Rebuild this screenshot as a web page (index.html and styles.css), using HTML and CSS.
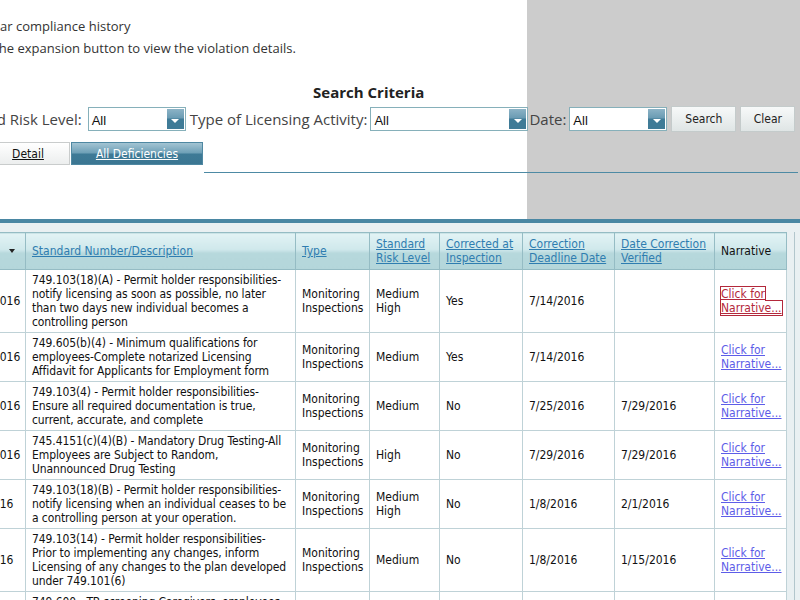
FILE: index.html
```html
<!DOCTYPE html>
<html lang="en">
<head>
<meta charset="utf-8">
<title>Compliance History</title>
<link rel="stylesheet" href="styles.css">
</head>
<body>
<div class="page">
  <div class="intro">
    <p>ten year compliance history</p>
    <p>Click the expansion button to view the violation details.</p>
  </div>

  <div class="search">
    <h3 class="search-title">Search Criteria</h3>
    <div class="search-row">
      <label class="lbl lbl-first">Standard Risk Level:</label>
      <div class="select s-small"><span class="val">All</span><span class="arrow"></span></div>
      <label class="lbl">Type of Licensing Activity:</label>
      <div class="select s-wide"><span class="val">All</span><span class="arrow"></span></div>
      <label class="lbl lbl-date">Date:</label>
      <div class="select s-small"><span class="val">All</span><span class="arrow"></span></div>
      <button class="btn btn-search" type="button">Search</button>
      <button class="btn btn-clear" type="button">Clear</button>
    </div>
  </div>

  <div class="tabs">
    <a class="tab tab-detail" href="#">Detail</a>
    <a class="tab tab-active" href="#">All Deficiencies</a>
    <div class="tab-rule"></div>
  </div>

  <div class="panel">
    <div class="grid">
      <table class="deficiencies">
        <colgroup>
          <col class="c-date"><col class="c-desc"><col class="c-type"><col class="c-risk">
          <col class="c-corr"><col class="c-dead"><col class="c-ver"><col class="c-narr">
        </colgroup>
        <thead>
          <tr>
            <th class="th-date"><a href="#">Date</a><span class="sort"></span></th>
            <th><a href="#">Standard Number/Description</a></th>
            <th><a href="#">Type</a></th>
            <th><a href="#">Standard Risk Level</a></th>
            <th><a href="#">Corrected at Inspection</a></th>
            <th><a href="#">Correction Deadline Date</a></th>
            <th><a href="#">Date Correction Verified</a></th>
            <th class="th-plain">Narrative</th>
          </tr>
        </thead>
        <tbody>
          <tr>
            <td>7/14/2016</td>
            <td class="desc">749.103(18)(A) - Permit holder responsibilities-<br>notify licensing as soon as possible, no later<br>than two days new individual becomes a<br>controlling person</td>
            <td>Monitoring Inspections</td>
            <td>Medium High</td>
            <td>Yes</td>
            <td>7/14/2016</td>
            <td></td>
            <td><a class="narr narr-focus" href="#">Click for Narrative...</a></td>
          </tr>
          <tr>
            <td>7/14/2016</td>
            <td class="desc">749.605(b)(4) - Minimum qualifications for<br>employees-Complete notarized Licensing<br>Affidavit for Applicants for Employment form</td>
            <td>Monitoring Inspections</td>
            <td>Medium</td>
            <td>Yes</td>
            <td>7/14/2016</td>
            <td></td>
            <td><a class="narr" href="#">Click for Narrative...</a></td>
          </tr>
          <tr>
            <td>7/11/2016</td>
            <td class="desc">749.103(4) - Permit holder responsibilities-<br>Ensure all required documentation is true,<br>current, accurate, and complete</td>
            <td>Monitoring Inspections</td>
            <td>Medium</td>
            <td>No</td>
            <td>7/25/2016</td>
            <td>7/29/2016</td>
            <td><a class="narr" href="#">Click for Narrative...</a></td>
          </tr>
          <tr>
            <td>7/15/2016</td>
            <td class="desc">745.4151(c)(4)(B) - Mandatory Drug Testing-All<br>Employees are Subject to Random,<br>Unannounced Drug Testing</td>
            <td>Monitoring Inspections</td>
            <td>High</td>
            <td>No</td>
            <td>7/29/2016</td>
            <td>7/29/2016</td>
            <td><a class="narr" href="#">Click for Narrative...</a></td>
          </tr>
          <tr>
            <td>1/4/2016</td>
            <td class="desc">749.103(18)(B) - Permit holder responsibilities-<br>notify licensing when an individual ceases to be<br>a controlling person at your operation.</td>
            <td>Monitoring Inspections</td>
            <td>Medium High</td>
            <td>No</td>
            <td>1/8/2016</td>
            <td>2/1/2016</td>
            <td><a class="narr" href="#">Click for Narrative...</a></td>
          </tr>
          <tr>
            <td>1/4/2016</td>
            <td class="desc">749.103(14) - Permit holder responsibilities-<br>Prior to implementing any changes, inform<br>Licensing of any changes to the plan developed<br>under 749.101(6)</td>
            <td>Monitoring Inspections</td>
            <td>Medium</td>
            <td>No</td>
            <td>1/8/2016</td>
            <td>1/15/2016</td>
            <td><a class="narr" href="#">Click for Narrative...</a></td>
          </tr>
          <tr>
            <td>1/4/2016</td>
            <td class="desc">749.600 - TB screening Caregivers, employees<br>and volunteers-Obtain a TB screening test<br>before contact with children, and as<br>required by the Department of State Health<br>Services</td>
            <td>Monitoring Inspections</td>
            <td>Medium</td>
            <td>No</td>
            <td>1/8/2016</td>
            <td>1/15/2016</td>
            <td><a class="narr" href="#">Click for Narrative...</a></td>
          </tr>
        </tbody>
      </table>
    </div>
  </div>
</div>
</body>
</html>
```

FILE: styles.css
```css
html, body {
  margin: 0;
  padding: 0;
}
body {
  background: #cccccc;
  font-family: "Open Sans", "DejaVu Sans", sans-serif;
  color: #333;
  overflow: hidden;
}
.page {
  margin-left: -60px;
  width: 587px;
  background: #ffffff;
  padding-top: 15px;
}
.intro p {
  margin: 0 0 0 23px;
  font-size: 13px;
  line-height: 22px;
  color: #333;
  white-space: nowrap;
}

/* search */
.search {
  width: max-content;
  margin-left: 2px;
  margin-top: 23px;
}
.search-title {
  margin: 0;
  text-align: center;
  font-size: 15px;
  line-height: 20px;
  font-weight: 700;
  color: #222;
}
.search-row {
  margin-top: 4px;
  display: flex;
  align-items: center;
  gap: 4px;
  height: 26px;
  white-space: nowrap;
}
.lbl {
  font-size: 15px;
  color: #444;
  margin-right: -1px;
}
.lbl-first {
  margin-right: 2px;
}
.lbl-date {
  margin-left: -3px;
}
.select {
  flex: none;
  box-sizing: border-box;
  height: 24px;
  border: 1px solid #86b0ba;
  background: #fff;
  display: flex;
  align-items: center;
  justify-content: space-between;
  padding: 1px;
}
.s-small { width: 98px; }
.s-wide { width: 158px; }
.select .val {
  font-family: "Liberation Sans", Arial, sans-serif;
  font-size: 13px;
  color: #111;
  padding-left: 2px;
  padding-top: 2px;
}
.select .arrow {
  width: 17px;
  height: 20px;
  background: linear-gradient(#8cb3c6 0%, #6a9bb3 45%, #3f7b97 50%, #3f7b97 100%);
  display: flex;
  align-items: center;
  justify-content: center;
}
.select .arrow::after {
  content: "";
  border-left: 4px solid transparent;
  border-right: 4px solid transparent;
  border-top: 4px solid #fff;
  margin-top: 3px;
}
.btn {
  flex: none;
  box-sizing: border-box;
  height: 26px;
  border: 1px solid #c4cbcb;
  background: linear-gradient(#f7f9f9, #dfe5e5);
  font-family: "DejaVu Sans Condensed", "DejaVu Sans", sans-serif;
  font-stretch: condensed;
  font-size: 12px;
  color: #222;
  padding: 0;
}
.btn-search { width: 65px; }
.btn-clear { width: 55px; }

/* tabs */
.tabs {
  margin-top: 10px;
  margin-left: 46px;
  display: flex;
  align-items: flex-start;
  gap: 1px;
}
.tab {
  flex: none;
  box-sizing: border-box;
  height: 23px;
  display: flex;
  align-items: center;
  justify-content: center;
  font-family: "DejaVu Sans Condensed", "DejaVu Sans", sans-serif;
  font-stretch: condensed;
  font-size: 12px;
  text-decoration: underline;
}
.tab-detail {
  width: 84px;
  color: #111;
  background: linear-gradient(#ffffff, #eceeee);
  border: 1px solid #c9cccc;
}
.tab-active {
  width: 132px;
  color: #fff;
  background: linear-gradient(#a3c4d3 0%, #6d9fb6 48%, #3e7a96 52%, #3b7692 100%);
  border: 1px solid #4f88a2;
}
.tab-rule {
  flex: none;
  width: 594px;
  height: 30px;
  border-bottom: 1px solid #4d8aa4;
}

/* panel and table */
.panel {
  margin-top: 46px;
  width: 880px;
  background: #e9f0f2;
  border-top: 4px solid #4a87a3;
  padding-top: 9px;
  padding-bottom: 40px;
}
.grid {
  box-sizing: border-box;
  width: 855px;
  padding-left: 15px;
  padding-right: 8px;
  border-right: 1px solid #b2c6cc;
}
.deficiencies {
  table-layout: fixed;
  border-collapse: collapse;
  width: 831px;
  background: #fff;
  font-family: "DejaVu Sans Condensed", "DejaVu Sans", sans-serif;
  font-stretch: condensed;
  font-size: 12px;
  line-height: 14px;
  color: #111;
}
.c-date { width: 70px; }
.c-desc { width: 270px; }
.c-type { width: 74px; }
.c-risk { width: 70px; }
.c-corr { width: 83px; }
.c-dead { width: 92px; }
.c-ver { width: 100px; }
.c-narr { width: 72px; }

.deficiencies th {
  text-align: left;
  font-weight: normal;
  padding: 4px 6px;
  border: 1px solid #95bcc4;
  background: linear-gradient(#e2f3f5 0%, #cfe8eb 45%, #b6d8dc 55%, #b4d6da 100%);
  vertical-align: middle;
}
.deficiencies th a {
  color: #2f7db0;
  text-decoration: underline;
}
.th-plain { color: #111; }
.th-date { position: relative; }
.sort {
  position: absolute;
  right: 10px;
  top: 16px;
  border-left: 3px solid transparent;
  border-right: 3px solid transparent;
  border-top: 4px solid #222;
}
.deficiencies td {
  padding: 3px 6px;
  border: 1px solid #bfd2d7;
  vertical-align: middle;
  overflow: hidden;
}
.deficiencies td.desc {
  white-space: nowrap;
  letter-spacing: -0.1px;
}
.deficiencies td:first-child {
  white-space: nowrap;
  padding-left: 9px;
}
.narr {
  color: #5d5de8;
  text-decoration: underline;
}
.narr-focus {
  color: #b3283b;
  outline: 1px solid #b3283b;
}
```
